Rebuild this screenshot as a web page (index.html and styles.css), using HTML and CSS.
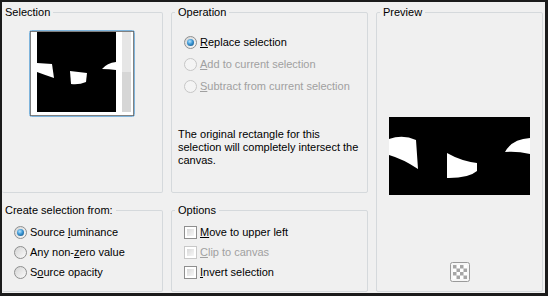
FILE: index.html
```html
<!DOCTYPE html>
<html lang="en">
<head>
    <meta charset="UTF-8">
    <meta name="viewport" content="width=device-width, initial-scale=1.0">
    <title>Selection From Mask</title>
    <link rel="stylesheet" href="styles.css">
</head>
<body>
    <div class="dialog">
        <fieldset class="group group-flush">
            <legend>Selection</legend>
            <div class="thumb">
                <svg width="107" height="87" viewBox="0 0 107 87">
                    <rect x="0.5" y="0.5" width="105" height="86" rx="2" fill="#fff" stroke="#7eb4dc"/>
                    <rect x="1.5" y="1.5" width="103" height="84" fill="none" stroke="#000" stroke-dasharray="1 1"/>
                    <rect x="8" y="2" width="79" height="80" fill="#000"/>
                    <rect x="93" y="2" width="9" height="40" fill="#e6e6e6"/>
                    <rect x="93" y="42" width="9" height="40" fill="#d6d6d6"/>
                    <path d="M8 33 L23 34 L25 48 Q16 45 8 42 Z" fill="#fff"/>
                    <path d="M41 41 L58 43 L57 52 Q50 55 42 54 Z" fill="#fff"/>
                    <path d="M73 39 Q78 33 87 32 L87 40 Q80 39 73 39 Z" fill="#fff"/>
                </svg>
            </div>
        </fieldset>

        <fieldset class="group">
            <legend>Operation</legend>
            <div class="choices op-choices">
                <label class="choice"><span class="radio checked"></span><span><u>R</u>eplace selection</span></label>
                <label class="choice disabled"><span class="radio"></span><span><u>A</u>dd to current selection</span></label>
                <label class="choice disabled"><span class="radio"></span><span><u>S</u>ubtract from current selection</span></label>
            </div>
            <p class="note">The original rectangle for this selection will completely intersect the canvas.</p>
        </fieldset>

        <fieldset class="group preview-group">
            <legend>Preview</legend>
            <svg class="preview" width="141" height="78" viewBox="0 0 141 78">
                <rect width="141" height="78" fill="#000"/>
                <path d="M0 22 Q14 17 27 23 L29 52 Q14 42 0 38 Z" fill="#fff"/>
                <path d="M58 36 Q72 44 88 46 L88 54 Q80 61 60 61 L58 61 Z" fill="#fff"/>
                <path d="M116 35 Q123 22 141 21 L141 37 Q128 34 116 35 Z" fill="#fff"/>
            </svg>
            <span class="checker-btn">
                <svg width="20" height="20" viewBox="0 0 20 20">
                    <rect x="0.5" y="0.5" width="19" height="19" rx="2" fill="#f7f7f7" stroke="#9a9a9a"/>
                    <rect x="3" y="3" width="14" height="14" fill="#fff"/>
                    <path d="M3 3h3.5v3.5H3z M10 3h3.5v3.5H10z M6.5 6.5H10V10H6.5z M13.5 6.5H17V10h-3.5z M3 10h3.5v3.5H3z M10 10h3.5v3.5H10z M6.5 13.5H10V17H6.5z M13.5 13.5H17V17h-3.5z" fill="#a6a6a6"/>
                </svg>
            </span>
        </fieldset>

        <fieldset class="group group-flush">
            <legend>Create selection from:</legend>
            <div class="choices low-choices">
                <label class="choice"><span class="radio checked"></span><span>Source <u>l</u>uminance</span></label>
                <label class="choice"><span class="radio"></span><span>Any non-<u>z</u>ero value</span></label>
                <label class="choice"><span class="radio"></span><span>S<u>o</u>urce opacity</span></label>
            </div>
        </fieldset>

        <fieldset class="group">
            <legend>Options</legend>
            <div class="choices low-choices">
                <label class="choice"><span class="check"></span><span><u>M</u>ove to upper left</span></label>
                <label class="choice disabled"><span class="check"></span><span><u>C</u>lip to canvas</span></label>
                <label class="choice"><span class="check"></span><span><u>I</u>nvert selection</span></label>
            </div>
        </fieldset>
    </div>
</body>
</html>
```

FILE: styles.css
```css
body {
    margin: 0;
    font-family: "Liberation Sans", Arial, sans-serif;
    font-size: 11px;
    color: #000;
}
.dialog {
    width: 548px;
    height: 296px;
    box-sizing: border-box;
    border-style: solid;
    border-color: #1b1b1b;
    border-width: 2px 3px 3px 2px;
    background: #f0f0f0;
    padding: 3px 2px 1px 0;
    display: grid;
    grid-template-columns: 161px 197px 167px;
    grid-template-rows: 188px 89px;
    column-gap: 8px;
    row-gap: 10px;
}
.group {
    margin: 0;
    padding: 0;
    min-width: 0;
    border: 1px solid #d5d9dc;
    border-radius: 2px;
}
.group legend {
    padding: 0 3px;
    margin-left: 3px;
    line-height: 14px;
}
.group-flush {
    border-left: 0;
}
.group-flush legend {
    margin-left: 0;
}
.thumb {
    display: flex;
    justify-content: center;
    padding-top: 11px;
}
.thumb svg {
    display: block;
}
.choices {
    display: flex;
    flex-direction: column;
    padding-left: 12px;
}
.op-choices {
    padding-top: 12px;
}
.op-choices .choice {
    height: 22px;
}
.low-choices {
    padding-top: 5px;
}
.low-choices .choice {
    height: 20px;
}
.choice {
    display: flex;
    align-items: center;
    gap: 3px;
    white-space: nowrap;
}
.choice.disabled {
    color: #a0a0a0;
}
.radio {
    position: relative;
    flex: none;
    width: 13px;
    height: 13px;
    box-sizing: border-box;
    border: 1px solid #8e8f8f;
    border-radius: 50%;
    background: linear-gradient(135deg, #d4d4d4, #fbfbfb);
}
.radio.checked::after {
    content: "";
    position: absolute;
    left: 2px;
    top: 2px;
    width: 7px;
    height: 7px;
    border-radius: 50%;
    background: radial-gradient(circle at 40% 35%, #b4e4ff 0, #3a95d3 45%, #0d4a78 100%);
}
.disabled .radio {
    border-color: #c6c6c6;
    background: #f4f4f4;
}
.check {
    flex: none;
    width: 13px;
    height: 13px;
    box-sizing: border-box;
    border: 1px solid #8f8f8f;
    padding: 2px;
    background: linear-gradient(135deg, #d9d9d9, #f7f7f7) content-box, #fff;
}
.disabled .check {
    border-color: #c8c8c8;
    background: #f4f4f4 content-box, #fff;
}
.note {
    margin: 31px 0 0;
    padding: 0 6px;
    line-height: 13px;
}
.preview-group {
    grid-column: 3;
    grid-row: 1 / 3;
    display: flex;
    flex-direction: column;
    align-items: center;
}
.preview {
    display: block;
    flex: none;
    margin-top: 98px;
}
.checker-btn {
    display: block;
    flex: none;
    margin-top: auto;
    margin-bottom: 9px;
    height: 20px;
}
```
